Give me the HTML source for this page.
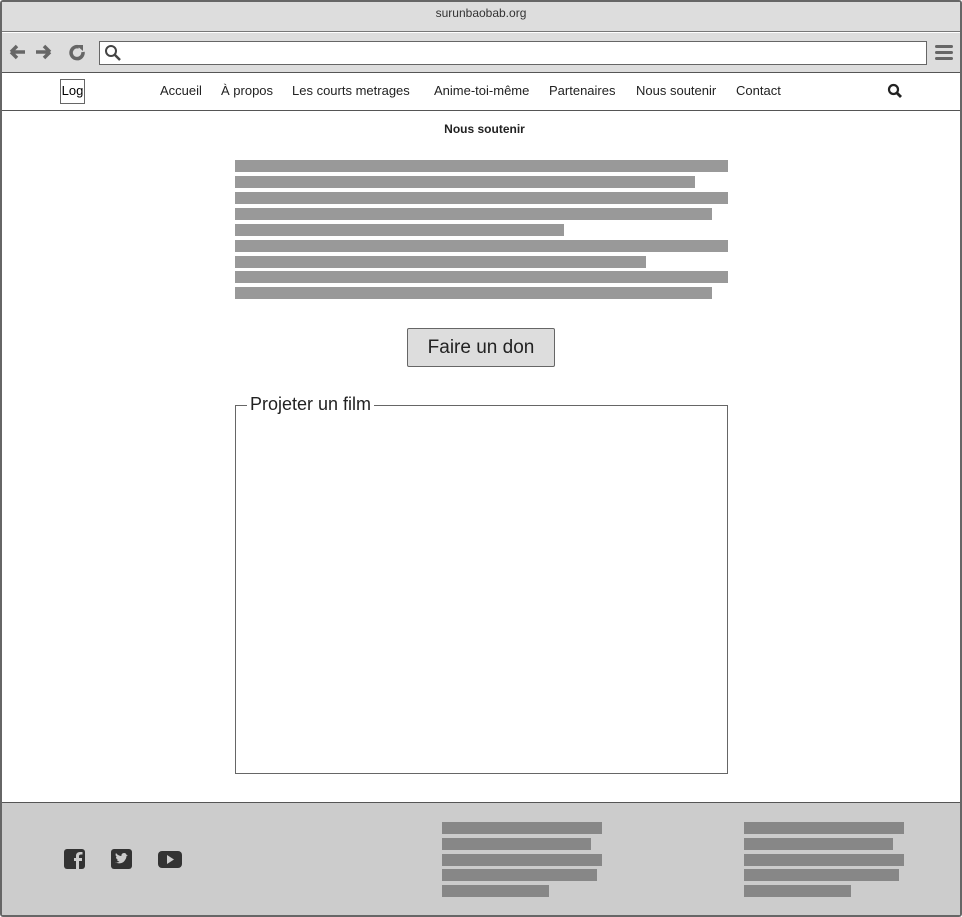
<!DOCTYPE html>
<html><head><meta charset="utf-8"><style>
*{margin:0;padding:0;box-sizing:border-box}
body{width:962px;height:917px;background:#fff;font-family:"Liberation Sans",sans-serif;position:relative;overflow:hidden}
.a{position:absolute}
.bar{position:absolute;height:12px;background:#999}
.fb{position:absolute;height:12px;background:#878787}
.nav{position:absolute;top:83px;font-size:13px;color:#222}
</style></head><body>
<div class="a" style="left:0;top:0;width:962px;height:917px;border:2px solid #666;border-radius:3px"></div>
<div class="a" style="left:2px;top:2px;width:958px;height:30px;background:#ddd;border-bottom:1px solid #777"></div>
<div class="a" style="left:0;top:6px;width:962px;text-align:center;font-size:12px;color:#333">surunbaobab.org</div>
<div class="a" style="left:2px;top:33px;width:958px;height:40px;background:#ddd;border-bottom:1px solid #555"></div>
<div class="a" style="left:2px;top:110px;width:958px;height:1px;background:#555"></div>
<svg class="a" style="left:8px;top:42px" width="80" height="20" viewBox="0 0 80 20">
<path d="M3 10h14M3 10l6-6M3 10l6 6" stroke="#666" stroke-width="3.5" fill="none"/>
<path d="M28 10h14M42 10l-6-6M42 10l-6 6" stroke="#666" stroke-width="3.5" fill="none"/>
<path d="M71 5a6 6 0 1 0 4 5" stroke="#666" stroke-width="3.5" fill="none"/><path d="M68 3l7 0 0 6z" fill="#666"/>
</svg>
<div class="a" style="left:99px;top:41px;width:828px;height:24px;background:#fff;border:1px solid #666"></div>
<svg class="a" style="left:104px;top:44px" width="18" height="18"><circle cx="7" cy="7" r="5" stroke="#444" stroke-width="2" fill="none"/><path d="M11 11l5 5" stroke="#444" stroke-width="2.5"/></svg>
<div class="a" style="left:935px;top:45px;width:18px;height:3px;background:#666;border-radius:2px"></div>
<div class="a" style="left:935px;top:51px;width:18px;height:3px;background:#666;border-radius:2px"></div>
<div class="a" style="left:935px;top:57px;width:18px;height:3px;background:#666;border-radius:2px"></div>
<div class="a" style="left:60px;top:79px;width:25px;height:25px;border:1px solid #666;font-size:13px;text-align:center;line-height:22px">Log</div>
<div class="nav" style="left:160px">Accueil</div>
<div class="nav" style="left:221px">À propos</div>
<div class="nav" style="left:292px">Les courts metrages</div>
<div class="nav" style="left:434px">Anime-toi-même</div>
<div class="nav" style="left:549px">Partenaires</div>
<div class="nav" style="left:636px">Nous soutenir</div>
<div class="nav" style="left:736px">Contact</div>
<svg class="a" style="left:887px;top:83px" width="16" height="16"><circle cx="6.5" cy="6.5" r="4.5" stroke="#222" stroke-width="2.2" fill="none"/><path d="M10 10l4 4" stroke="#222" stroke-width="2.8"/></svg>
<div class="a" style="left:0;top:122px;width:969px;text-align:center;font-size:12px;font-weight:bold;color:#222">Nous soutenir</div>
<div class="bar" style="left:235px;top:160px;width:493px"></div>
<div class="bar" style="left:235px;top:176px;width:460px"></div>
<div class="bar" style="left:235px;top:192px;width:493px"></div>
<div class="bar" style="left:235px;top:208px;width:477px"></div>
<div class="bar" style="left:235px;top:224px;width:329px"></div>
<div class="bar" style="left:235px;top:240px;width:493px"></div>
<div class="bar" style="left:235px;top:256px;width:411px"></div>
<div class="bar" style="left:235px;top:271px;width:493px"></div>
<div class="bar" style="left:235px;top:287px;width:477px"></div>
<div class="a" style="left:407px;top:328px;width:148px;height:39px;background:#ddd;border:1px solid #666;border-radius:2px;font-size:19px;text-align:center;line-height:37px;color:#222">Faire un don</div>
<div class="a" style="left:235px;top:405px;width:493px;height:369px;border:1px solid #666"></div>
<div class="a" style="left:247px;top:394px;padding:0 3px;background:#fff;font-size:18px;color:#222">Projeter un film</div>
<div class="a" style="left:2px;top:802px;width:958px;height:113px;background:#ccc;border-top:1px solid #555"></div>
<svg class="a" style="left:63px;top:848px" width="122" height="22">
<rect x="1" y="1" width="21" height="20" rx="3" fill="#333"/><path d="M16 21v-8h3v-3h-3V8c0-1 1-1.5 2-1.5h1.5V4H17c-3 0-4 2-4 4v2h-2v3h2v8z" fill="#ccc"/>
<rect x="48" y="1" width="21" height="20" rx="3" fill="#333"/><path d="M52 14c3 2 8 2 10-2 1-1 1.5-3 1.5-4l1.5-1-1.5 0c0-1-1-2-2.5-2s-3 1.5-2.5 3c-2 0-4-1-5.5-3-1 2 0 3.5 1 4l-1 0c0 1.5 1 2.5 2 3h-1c.5 1 1.5 1.5 2.5 1.5-1 1-2.5 1-4 1z" fill="#ccc"/>
<rect x="95" y="3" width="24" height="17" rx="4" fill="#333"/><path d="M104 7v9l7-4.5z" fill="#ccc"/>
</svg>
<div class="fb" style="left:442px;top:822px;width:160px"></div>
<div class="fb" style="left:442px;top:838px;width:149px"></div>
<div class="fb" style="left:442px;top:854px;width:160px"></div>
<div class="fb" style="left:442px;top:869px;width:155px"></div>
<div class="fb" style="left:442px;top:885px;width:107px"></div>
<div class="fb" style="left:744px;top:822px;width:160px"></div>
<div class="fb" style="left:744px;top:838px;width:149px"></div>
<div class="fb" style="left:744px;top:854px;width:160px"></div>
<div class="fb" style="left:744px;top:869px;width:155px"></div>
<div class="fb" style="left:744px;top:885px;width:107px"></div>
</body></html>
